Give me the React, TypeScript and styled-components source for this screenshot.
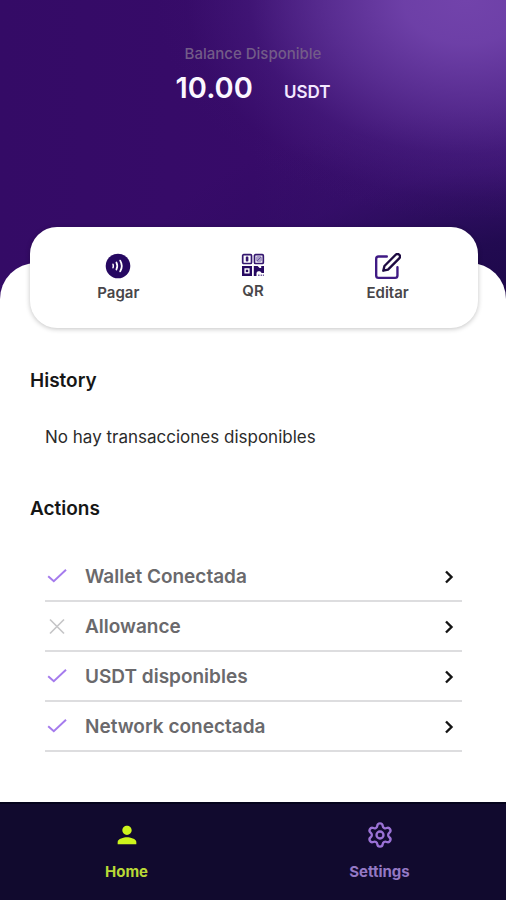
import React from "react";
import styled, { createGlobalStyle } from "styled-components";
import { Settings } from "lucide-react";
import { MdPerson } from "react-icons/md";

const GlobalStyle = createGlobalStyle`
  *, *::before, *::after { box-sizing: border-box; }
  body {
    margin: 0;
    background: #ffffff;
    font-family: Inter, "Liberation Sans", sans-serif;
  }
  button { font-family: inherit; }
`;

const Page = styled.div`
  min-height: 100vh;
  display: flex;
  flex-direction: column;
  background:
    radial-gradient(ellipse 310px 220px at 92% 0, #7243ab 0%, rgba(112, 66, 170, 0.94) 20%, rgba(98, 54, 156, 0.74) 45%, rgba(78, 36, 136, 0.36) 70%, rgba(60, 20, 112, 0.1) 90%, rgba(56, 14, 106, 0) 100%) top / 100% 320px no-repeat,
    radial-gradient(ellipse 440px 210px at 110% 310px, #1a0646 0%, rgba(28, 8, 74, 0.85) 35%, rgba(42, 11, 94, 0.4) 70%, rgba(52, 12, 102, 0) 100%) top / 100% 320px no-repeat,
    linear-gradient(90deg, #340b66 0%, #370b69 50%, #431879 100%) top / 100% 320px no-repeat;
`;

const Balance = styled.header`
  height: 263px;
  padding-top: 44px;
  display: flex;
  flex-direction: column;
  align-items: center;
`;

const BalanceLabel = styled.p`
  margin: 0;
  font-size: 15px;
  line-height: 20px;
  font-weight: 500;
  color: #735c88;
`;

const BalanceRow = styled.div`
  margin-top: 6px;
  display: flex;
  align-items: baseline;
  gap: 31px;
  line-height: 36px;
  color: #fbf7ff;
  font-weight: 600;
`;

const Amount = styled.span`
  font-size: 29px;
`;

const Currency = styled.span`
  font-size: 17px;
  color: #f3e8ff;
`;

const Sheet = styled.main`
  flex: 1;
  padding: 0 30px 48px;
  border-radius: 36px 36px 0 0;
  background: #ffffff;
`;

const QuickActions = styled.section`
  display: grid;
  grid-template-columns: repeat(3, 1fr);
  height: 101px;
  margin: -36px -2px 0 0;
  padding: 26px 23px 0 21px;
  border-radius: 27px;
  background: #ffffff;
  box-shadow: 0 1px 5px rgba(0, 0, 0, 0.24);
`;

const QuickButton = styled.button`
  display: flex;
  flex-direction: column;
  align-items: center;
  gap: 4px;
  height: 52px;
  padding: 0;
  border: 0;
  background: none;
  color: #484649;
  font-size: 15px;
  line-height: 20px;
  font-weight: 600;
  cursor: pointer;
`;

const Heading = styled.h2`
  margin: 0;
  font-size: 19px;
  line-height: 24px;
  font-weight: 600;
  color: #161616;
`;

const History = styled.section`
  padding-top: 41px;
`;

const EmptyText = styled.p`
  margin: 32px 15px 0;
  font-size: 17px;
  line-height: 24px;
  color: #2b2b2b;
`;

const Actions = styled.section`
  padding-top: 48px;
`;

const ActionList = styled.ul`
  list-style: none;
  margin: 31px 14px 0 15px;
  padding: 0;
`;

const ActionItem = styled.li`
  border-bottom: 2px solid #dddddf;
`;

const ActionButton = styled.button`
  display: flex;
  align-items: center;
  width: 100%;
  height: 48px;
  padding: 2px 6px 0 2px;
  border: 0;
  background: none;
  color: #6a696c;
  font-size: 19px;
  line-height: 24px;
  font-weight: 600;
  text-align: left;
  cursor: pointer;
`;

const ActionLabel = styled.span`
  flex: 1;
  margin-left: 18px;
`;

const TabBar = styled.nav`
  display: grid;
  grid-template-columns: 1fr 1fr;
  height: 98px;
  border-top: 2px solid #05041c;
  background: #110a2e;
`;

const Tab = styled.a<{ $active?: boolean }>`
  display: flex;
  flex-direction: column;
  align-items: center;
  gap: 13px;
  padding-top: 17px;
  color: ${({ $active }) => ($active ? "#cdf51c" : "#9b72d6")};
  text-decoration: none;
`;

const TabLabel = styled.span<{ $active?: boolean }>`
  font-size: 15px;
  line-height: 20px;
  font-weight: 700;
  color: ${({ $active }) => ($active ? "#b9d936" : "#9478c4")};
`;

const PayIcon = () => (
  <svg width="26" height="26" viewBox="0 0 26 26" aria-hidden="true">
    <circle cx="13" cy="13" r="12.3" fill="#260861" />
    <g fill="none" stroke="#ffffff" strokeLinecap="round">
      <path d="M8 11.3q.7 1.7 0 3.4" strokeWidth="1.5" />
      <path d="M11.4 9.5q1.8 3.5 0 7" strokeWidth="1.7" />
      <path d="M15.2 7.6q3.2 5.4 0 10.8" strokeWidth="1.8" />
    </g>
  </svg>
);

const QrIcon = () => (
  <svg width="24" height="24" viewBox="0 0 24 24" aria-hidden="true">
    <g fill="none" stroke="#35176f" strokeWidth="1.7">
      <rect x="1.7" y="1.7" width="8.8" height="8.8" rx="1" />
      <rect x="13.5" y="1.7" width="8.8" height="8.8" rx="1" />
    </g>
    <rect x="4.8" y="3.6" width="2.6" height="5" rx=".8" fill="#35176f" />
    <circle cx="17.9" cy="6.1" r="3.3" fill="#a99cc8" />
    <path d="M16 8l3.8-3.8" stroke="#6a55a0" strokeWidth="1" />
    <path fillRule="evenodd" fill="#260861" d="M1 12.9h10V23H1zM3.4 15.3h5.2v5.3H3.4z" />
    <rect x="4.8" y="16.7" width="2.4" height="2.4" fill="#260861" />
    <path fill="#260861" d="M12.8 12.9h3.8l2 2h1.6v-2H23v7h-2.3l-1.6-1.6h-2.3l-1.3 1.5V23h-2.7z" />
    <path fill="#75629f" d="M17 21.4h1.6V23H17zM19.6 21.4H21V23h-1.4zM21.8 21.4H23V23h-1.2z" />
  </svg>
);

const EditIcon = () => (
  <svg width="26" height="26" viewBox="1 1 22 22" fill="none" strokeWidth="2" strokeLinecap="round" strokeLinejoin="round" aria-hidden="true">
    <path stroke="#3f1a84" d="M11 4H4a2 2 0 0 0-2 2v14a2 2 0 0 0 2 2h14a2 2 0 0 0 2-2v-7" />
    <path stroke="#1e0b42" d="M18.5 2.5a2.121 2.121 0 0 1 3 3L12 15l-4 1 1-4 9.5-9.5z" />
  </svg>
);

const StatusIcon = ({ done }: { done: boolean }) => (
  <svg width="20" height="20" viewBox="0 0 20 20" fill="none" strokeWidth="2" role="img" aria-label={done ? "Completado" : "Pendiente"}>
    {done ? (
      <path stroke="#a57bed" d="M1.2 9.2l5.6 5L19 2.8" />
    ) : (
      <path stroke="#c6c6c8" strokeWidth="1.7" d="M3 2.5l14 14M17 2.5l-14 14" />
    )}
  </svg>
);

const Chevron = () => (
  <svg width="12" height="14" viewBox="0 0 12 14" fill="none" stroke="#141414" strokeWidth="2.4" aria-hidden="true">
    <path d="M2 1.5L7.5 7L2 12.5" />
  </svg>
);

const quickActions = [
  { label: "Pagar", Icon: PayIcon },
  { label: "QR", Icon: QrIcon },
  { label: "Editar", Icon: EditIcon },
];

const actions = [
  { label: "Wallet Conectada", done: true },
  { label: "Allowance", done: false },
  { label: "USDT disponibles", done: true },
  { label: "Network conectada", done: true },
];

export default function App() {
  return (
    <>
      <GlobalStyle />
      <Page>
        <Balance>
          <BalanceLabel>Balance Disponible</BalanceLabel>
          <BalanceRow>
            <Amount>10.00</Amount>
            <Currency>USDT</Currency>
          </BalanceRow>
        </Balance>
        <Sheet>
          <QuickActions>
            {quickActions.map(({ label, Icon }) => (
              <QuickButton key={label} type="button">
                <Icon />
                {label}
              </QuickButton>
            ))}
          </QuickActions>
          <History>
            <Heading>History</Heading>
            <EmptyText>No hay transacciones disponibles</EmptyText>
          </History>
          <Actions>
            <Heading>Actions</Heading>
            <ActionList>
              {actions.map(({ label, done }) => (
                <ActionItem key={label}>
                  <ActionButton type="button">
                    <StatusIcon done={done} />
                    <ActionLabel>{label}</ActionLabel>
                    <Chevron />
                  </ActionButton>
                </ActionItem>
              ))}
            </ActionList>
          </Actions>
        </Sheet>
        <TabBar>
          <Tab href="#home" $active aria-current="page">
            <MdPerson size={28} aria-hidden="true" />
            <TabLabel $active>Home</TabLabel>
          </Tab>
          <Tab href="#settings">
            <Settings size={28} aria-hidden="true" />
            <TabLabel>Settings</TabLabel>
          </Tab>
        </TabBar>
      </Page>
    </>
  );
}
